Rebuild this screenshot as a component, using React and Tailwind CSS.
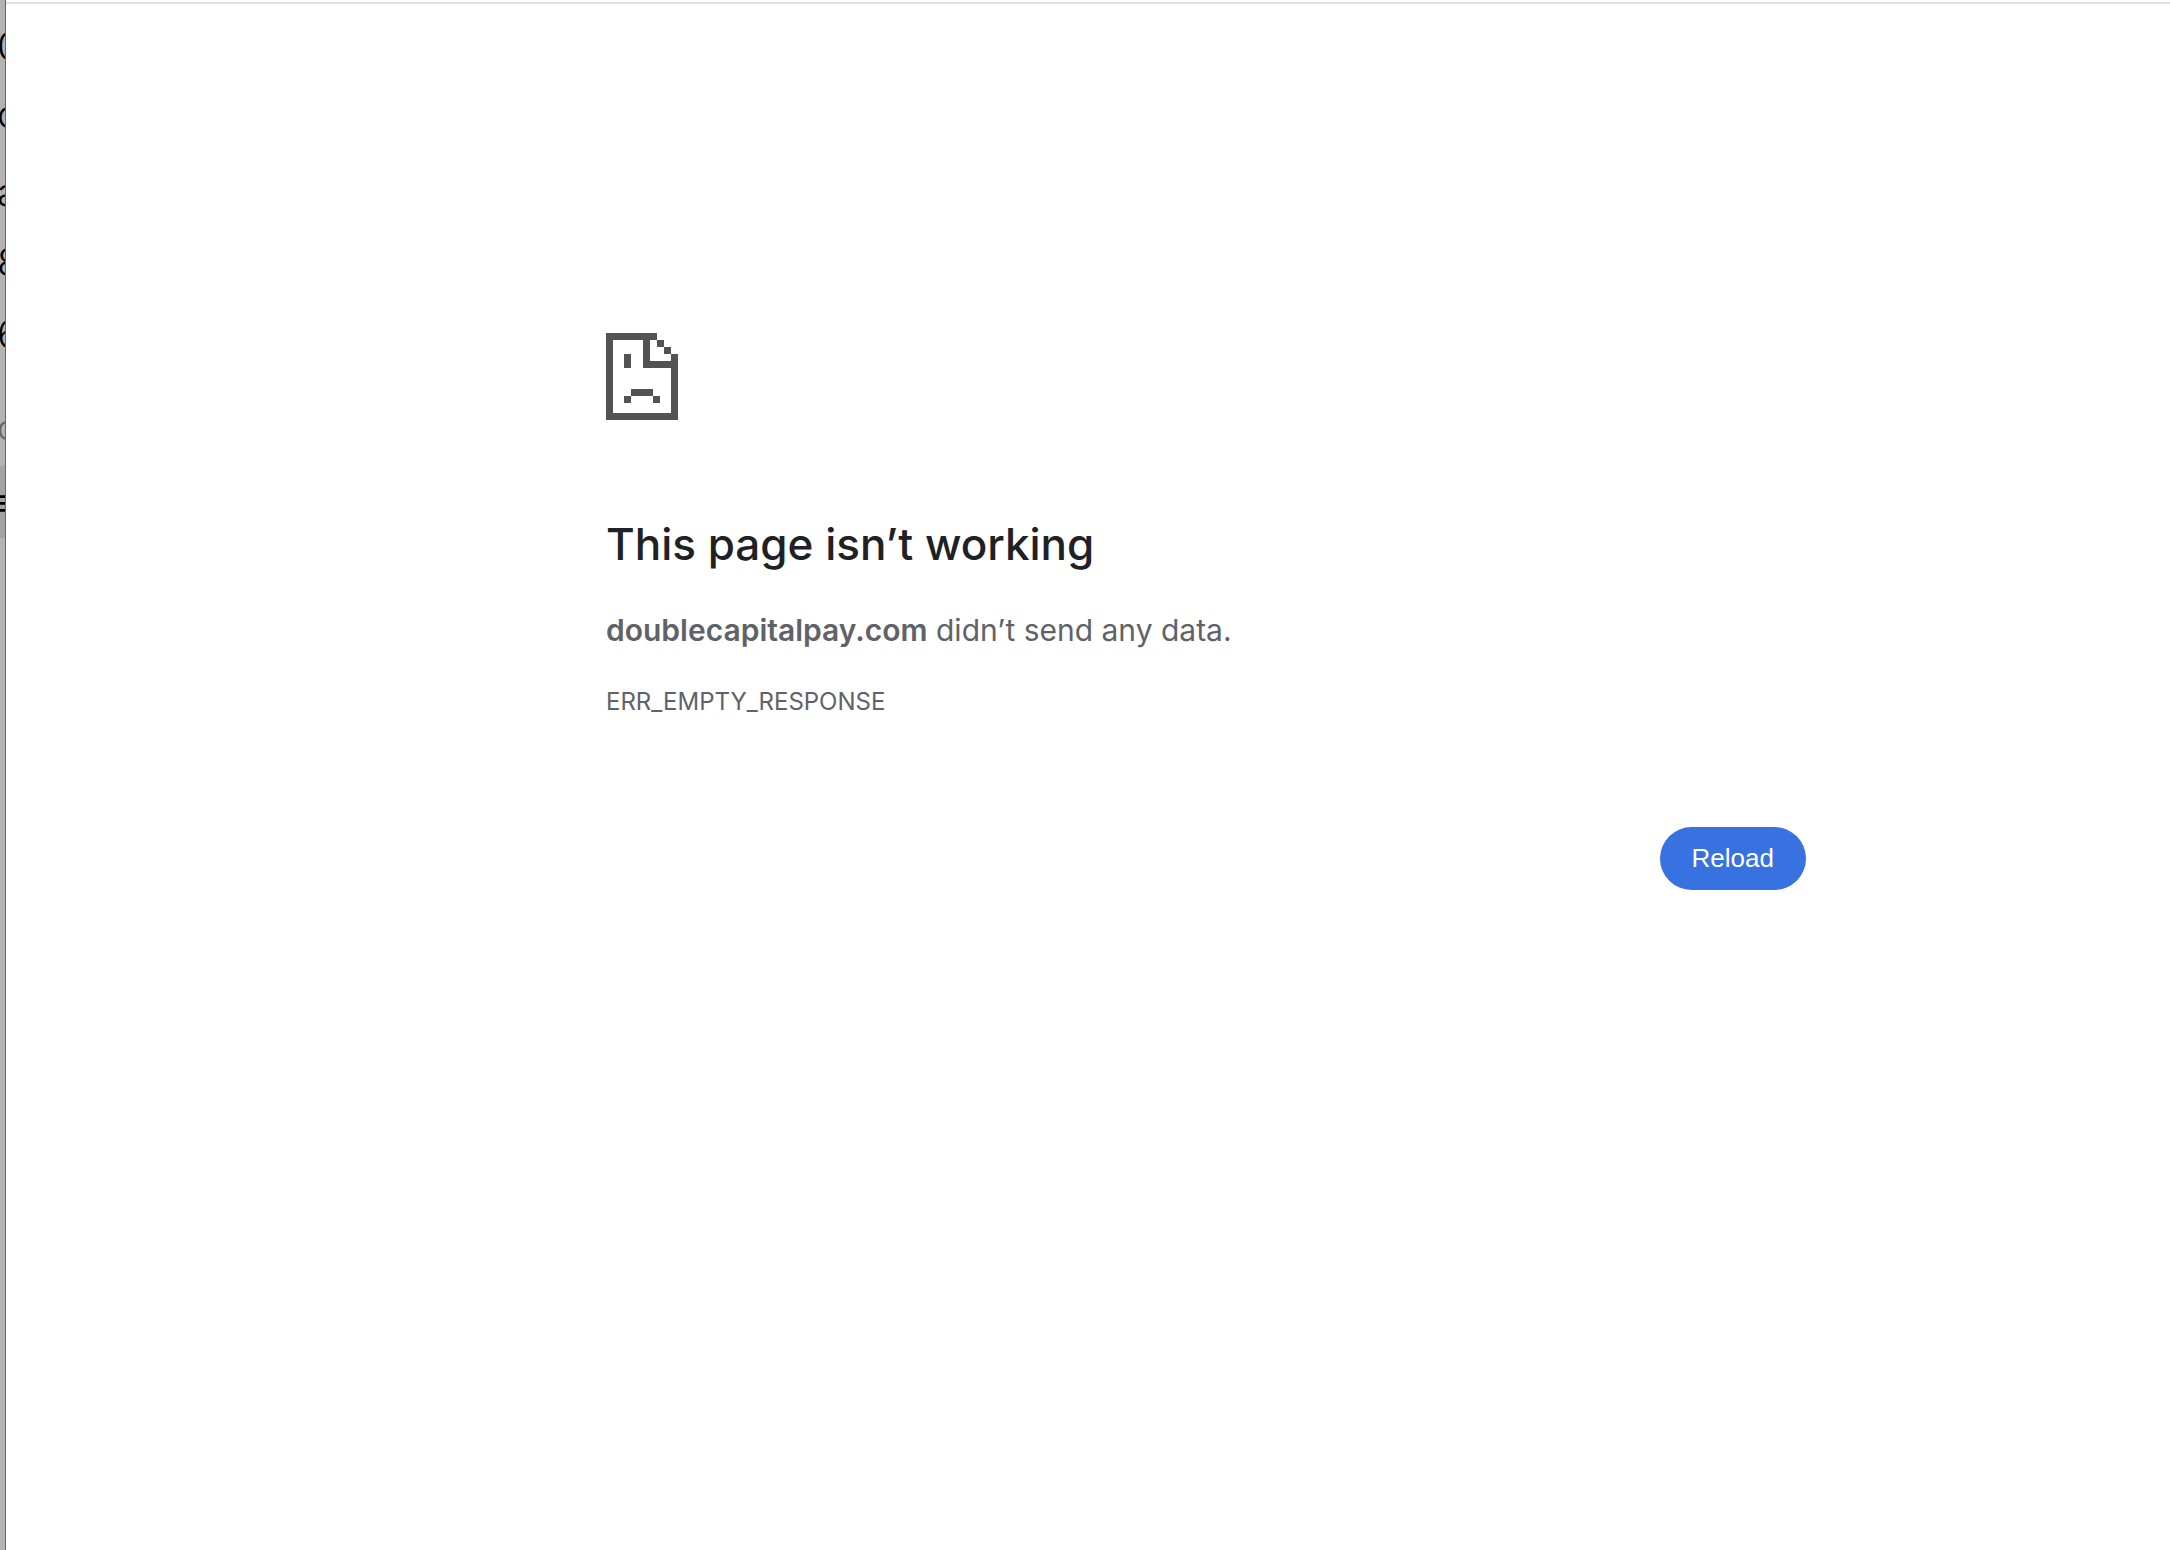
import React from 'react';

// Letters of the window behind, only their left edge shows
const BACKGROUND_LINES = [
    { id: 'l1', text: '0', className: 'h-[70px] pt-[24px] text-[38px] leading-[44px] text-black' },
    { id: 'l2', text: 'c', className: 'h-[76px] pt-[22px] text-[38px] leading-[44px] text-black' },
    { id: 'l3', text: 'a', className: 'h-[72px] pt-[24px] text-[38px] leading-[44px] text-black' },
    { id: 'l4', text: '8', className: 'h-[80px] pt-[22px] text-[38px] leading-[44px] text-black' },
    { id: 'l5', text: '6', className: 'h-[100px] pt-[14px] text-[38px] leading-[44px] text-black' },
    { id: 'l6', text: 'o', className: 'h-[68px] pt-[8px] text-[34px] leading-[44px] text-[#666666]' },
    { id: 'l7', text: '≡', className: 'h-[72px] bg-[#a3a3a3] pt-[14px] -indent-[8px] text-[38px] leading-[44px] text-black' },
];

const BackgroundStrip = () => (
    <div className="w-[6px] shrink-0 overflow-hidden border-r border-[#666666] bg-[#b3b3b3] -indent-[3px] font-light" aria-hidden="true">
        {BACKGROUND_LINES.map(line => (
            <div key={line.id} className={line.className}>{line.text}</div>
        ))}
    </div>
);

const SadPageIcon = () => (
    <svg className="block h-[87px] w-[72px]" viewBox="0 0 72 87" fill="#535353" shapeRendering="crispEdges" aria-hidden="true">
        <path d="M0 0H51V7H44V28H65V21H72V87H0ZM7 7V80H65V35H37V7Z" fillRule="evenodd" />
        <path d="M51 7H58V14H51ZM58 14H65V21H58Z" />
        <path d="M18 21H25V35H18Z" />
        <path d="M25 56H47V63H25ZM18 63H25V70H18ZM47 63H54V70H47Z" />
    </svg>
);

const App = () => {
    return (
        <div className="flex min-h-screen bg-white font-['Inter','Liberation_Sans',sans-serif]">
            <BackgroundStrip />
            <div className="flex min-w-0 flex-1 flex-col">
                <div className="mt-[2px] h-[2px] bg-[#e0e0e0]" />
                <main className="ml-[600px] mr-6 max-w-[1200px] pt-[329px]">
                    <SadPageIcon />
                    <h1 className="mt-24 text-[44px] font-medium leading-[56px] text-[#202124]">This page isn’t working</h1>
                    <p className="mt-9 text-[30px] leading-[44px] text-[#5f6368]">
                        <strong className="font-semibold">doublecapitalpay.com</strong> didn’t send any data.
                    </p>
                    <p className="mt-8 text-[24px] leading-[36px] text-[#5f6368]">ERR_EMPTY_RESPONSE</p>
                    <div className="mt-[107px] flex justify-end">
                        <button
                            type="button"
                            className="h-[63px] rounded-full bg-[#3871e0] px-8 font-['Liberation_Sans',Arial,sans-serif] text-[26px] text-white"
                        >
                            Reload
                        </button>
                    </div>
                </main>
            </div>
        </div>
    );
};

export default App;
